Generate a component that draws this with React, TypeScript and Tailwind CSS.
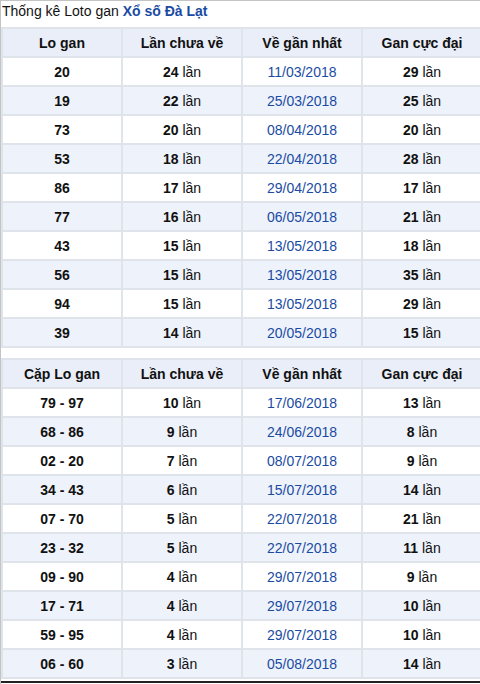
import React from "react";

const t1: [string, string, string, string][] = [
  ["20", "24", "11/03/2018", "29"],
  ["19", "22", "25/03/2018", "25"],
  ["73", "20", "08/04/2018", "20"],
  ["53", "18", "22/04/2018", "28"],
  ["86", "17", "29/04/2018", "17"],
  ["77", "16", "06/05/2018", "21"],
  ["43", "15", "13/05/2018", "18"],
  ["56", "15", "13/05/2018", "35"],
  ["94", "15", "13/05/2018", "29"],
  ["39", "14", "20/05/2018", "15"],
];

const t2: [string, string, string, string][] = [
  ["79 - 97", "10", "17/06/2018", "13"],
  ["68 - 86", "9", "24/06/2018", "8"],
  ["02 - 20", "7", "08/07/2018", "9"],
  ["34 - 43", "6", "15/07/2018", "14"],
  ["07 - 70", "5", "22/07/2018", "21"],
  ["23 - 32", "5", "22/07/2018", "11"],
  ["09 - 90", "4", "29/07/2018", "9"],
  ["17 - 71", "4", "29/07/2018", "10"],
  ["59 - 95", "4", "29/07/2018", "10"],
  ["06 - 60", "3", "05/08/2018", "14"],
];

function Table({ first, rows }: { first: string; rows: [string, string, string, string][] }) {
  const heads = [first, "Lần chưa về", "Về gần nhất", "Gan cực đại"];
  return (
    <div className="grid grid-cols-[118px_118px_118px_118px] gap-[2px] p-[2px] bg-[#dfe4eb] w-[482px]">
      {heads.map((h) => (
        <div key={h} className="h-[27px] bg-[#e9eef8] flex items-center justify-center font-bold text-[#111]">
          {h}
        </div>
      ))}
      {rows.map((r, i) => {
        const bg = i % 2 === 0 ? "bg-white" : "bg-[#eef2fa]";
        return (
          <React.Fragment key={i}>
            <div className={`h-[27px] ${bg} flex items-center justify-center font-bold text-[#111]`}>{r[0]}</div>
            <div className={`h-[27px] ${bg} flex items-center justify-center text-[#111]`}>
              <span className="font-bold">{r[1]}</span>&nbsp;lần
            </div>
            <div className={`h-[27px] ${bg} flex items-center justify-center text-[#1a4ba3]`}>{r[2]}</div>
            <div className={`h-[27px] ${bg} flex items-center justify-center text-[#111]`}>
              <span className="font-bold">{r[3]}</span>&nbsp;lần
            </div>
          </React.Fragment>
        );
      })}
    </div>
  );
}

export default function App() {
  return (
    <div
      className="w-[480px] h-[684px] overflow-hidden bg-white border-l border-t border-[#c4c4c4] text-[14px] leading-none"
      style={{ fontFamily: '"Liberation Sans", Arial, sans-serif' }}
    >
      <div className="h-[26px] flex flex-col">
        <div className="pl-[1px] pt-[2px] text-[#111] leading-[16px]">
          Thống kê Loto gan <span className="font-bold text-[#1a4ba3]">Xổ số Đà Lạt</span>
        </div>
      </div>
      <Table first="Lo gan" rows={t1} />
      <div className="h-[10px]" />
      <Table first="Cặp Lo gan" rows={t2} />
      <div className="h-[2px]" />
      <div className="h-[2px] bg-[#222] w-[480px]" />
    </div>
  );
}
